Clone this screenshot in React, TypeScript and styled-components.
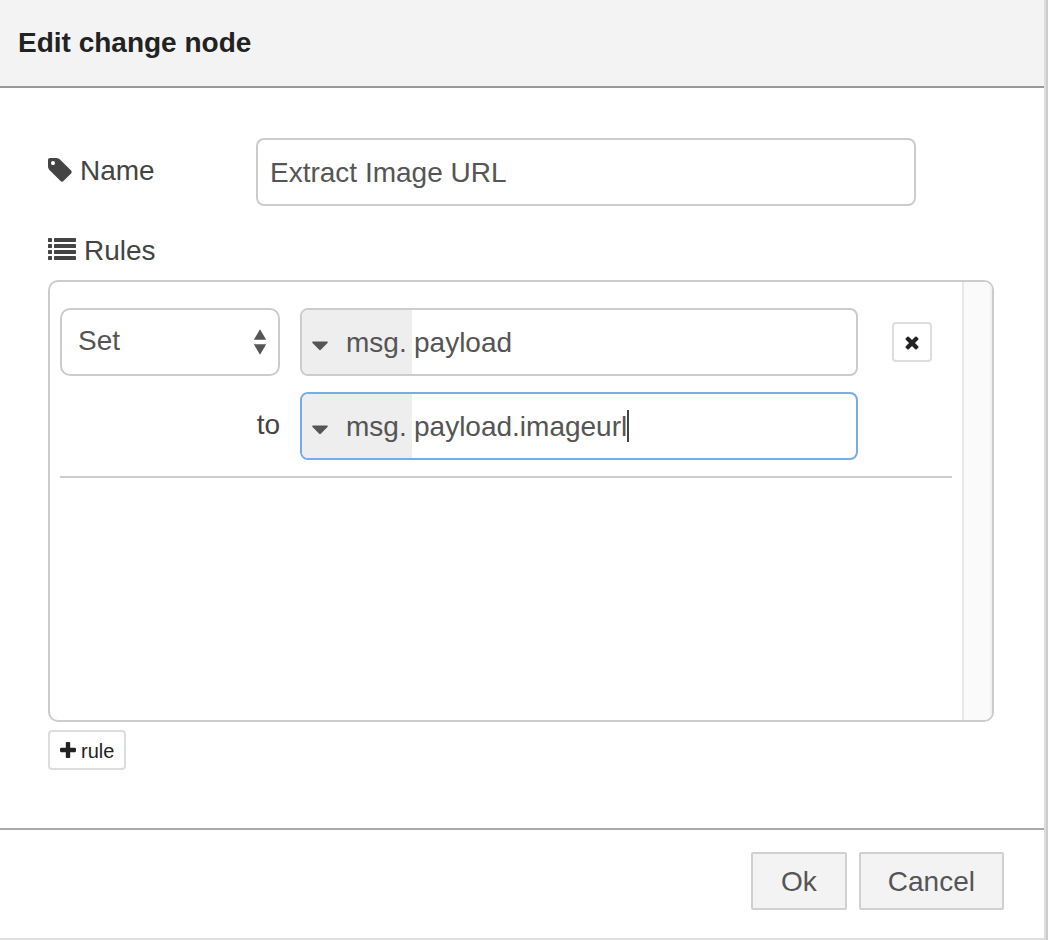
import React, { useState } from "react";
import styled, { createGlobalStyle } from "styled-components";

const GlobalStyle = createGlobalStyle`
  *, *::before, *::after { box-sizing: border-box; }
  body {
    margin: 0;
    background: #ccc;
    color: #444;
    font: 28px/40px "Liberation Sans", Arial, sans-serif;
  }
  button, input, select { font: inherit; }
`;

const Dialog = styled.form`
  display: flex;
  flex-direction: column;
  min-height: 100vh;
  margin-right: 2px;
  background: #fff;
  border-right: 2px solid #ddd;
  border-bottom: 2px solid #ddd;
`;

const Header = styled.header`
  padding: 23px 18px;
  background: #f3f3f3;
  border-bottom: 2px solid #999;
`;

const Title = styled.h1`
  margin: 0;
  color: #222;
  font-size: 28px;
  line-height: 40px;
  font-weight: bold;
`;

const Body = styled.main`
  flex: 1;
  padding: 50px 50px 58px 48px;
`;

const FormRow = styled.div`
  display: flex;
  align-items: center;
`;

const Label = styled.label`
  display: flex;
  align-items: center;
  gap: 8px;
  width: 208px;
  padding-bottom: 2px;

  svg { margin-bottom: 2px; }
`;

const NameInput = styled.input`
  flex: 1;
  min-width: 0;
  max-width: 660px;
  height: 68px;
  padding: 2px 12px 0;
  color: #555;
  background: #fff;
  border: 2px solid #ccc;
  border-radius: 8px;
  outline: none;
`;

const RulesHeading = styled.h2`
  display: flex;
  align-items: center;
  gap: 8px;
  margin: 25px 0 9px;
  font-size: 28px;
  line-height: 40px;
  font-weight: normal;

  svg { margin-bottom: 4px; }
`;

const RuleBox = styled.section`
  display: flex;
  min-height: 442px;
  border: 2px solid #ccc;
  border-radius: 10px;
  overflow: hidden;
`;

const RuleList = styled.div`
  flex: 1;
  min-width: 0;
  padding: 10px;
`;

const ScrollTrack = styled.div`
  width: 30px;
  background: #fafafa;
  border-left: 2px solid #e8e8e8;
  border-right: 2px solid #f0f0f0;
`;

const Rule = styled.div`
  display: grid;
  grid-template-columns: 220px minmax(0, 1fr) 54px;
  column-gap: 20px;
  row-gap: 16px;
  align-items: center;
  padding: 16px 20px 16px 0;
  border-bottom: 2px solid #ccc;
`;

const SelectWrap = styled.div`
  position: relative;
  color: #555;
`;

const Select = styled.select`
  display: block;
  width: 100%;
  height: 68px;
  padding: 0 40px 2px 16px;
  appearance: none;
  color: inherit;
  background: #fff;
  border: 2px solid #ccc;
  border-radius: 10px;
  outline: none;
`;

const SelectArrows = styled.svg`
  position: absolute;
  top: 20px;
  right: 13px;
  pointer-events: none;
`;

const ToLabel = styled.label`
  padding-bottom: 2px;
  text-align: right;
`;

const TypedField = styled.div<{ $active?: boolean }>`
  display: flex;
  align-items: center;
  height: 68px;
  color: #555;
  background: #fff;
  border: 2px solid ${(p) => (p.$active ? "#78aaec" : "#ccc")};
  border-radius: 8px;
  overflow: hidden;
`;

const TypeButton = styled.button`
  display: flex;
  align-items: center;
  gap: 18px;
  width: 110px;
  height: 100%;
  padding: 2px 0 0 10px;
  color: inherit;
  background: #eee;
  border: 0;

  svg { margin-top: 6px; }
`;

const TypedInput = styled.input<{ $fit?: boolean }>`
  ${(p) => (p.$fit ? "field-sizing: content;" : "flex: 1;")}
  min-width: 0;
  height: 100%;
  padding: 2px 0 0 2px;
  color: inherit;
  background: transparent;
  border: 0;
  outline: none;
  caret-color: transparent;
`;

const TextCursor = styled.span`
  width: 2px;
  height: 32px;
  background: #444;
`;

const SmallButton = styled.button`
  display: inline-flex;
  align-items: center;
  justify-content: center;
  gap: 5px;
  height: 40px;
  min-width: 40px;
  padding: 2px 10px 0;
  color: #222;
  font-size: 20px;
  background: #fff;
  border: 2px solid #ddd;
  border-radius: 4px;
`;

const RemoveButton = styled(SmallButton)`
  justify-self: end;
  width: 40px;
  padding: 2px 0 0;
`;

const AddButton = styled(SmallButton)`
  display: flex;
  margin-top: 8px;

  svg { margin-bottom: 2px; }
`;

const Footer = styled.footer`
  display: flex;
  justify-content: flex-end;
  gap: 12px;
  padding: 22px 40px 28px;
  border-top: 2px solid #aaa;
`;

const FooterButton = styled.button`
  min-width: 96px;
  height: 58px;
  padding: 2px 27px 0;
  color: #555;
  background: #f3f3f3;
  border: 2px solid #d0d0d0;
  border-radius: 2px;
`;

const TagIcon = () => (
  <svg width="24" height="24" viewBox="128 128 1536 1536" fill="currentColor" aria-hidden="true">
    <path d="M576 448q0-53-37.5-90.5t-90.5-37.5-90.5 37.5-37.5 90.5 37.5 90.5 90.5 37.5 90.5-37.5 37.5-90.5zm1067 576q0 53-37 90l-491 492q-39 37-91 37-53 0-90-37l-715-716q-38-37-64.5-101t-26.5-117v-416q0-52 38-90t90-38h416q53 0 117 26.5t102 64.5l715 714q37 39 37 91z" />
  </svg>
);

const ListIcon = () => (
  <svg width="28" height="22" viewBox="0 0 28 22" fill="currentColor" aria-hidden="true">
    {[0, 6, 12, 18].map((y) => (
      <React.Fragment key={y}>
        <rect x="0" y={y} width="4" height="4" rx="0.4" />
        <rect x="6" y={y} width="22" height="4" rx="0.4" />
      </React.Fragment>
    ))}
  </svg>
);

const CaretIcon = () => (
  <svg width="16" height="10" viewBox="0 0 16 10" fill="currentColor" aria-hidden="true">
    <path d="M1 0.5H15Q16.3 0.8 15.5 2L8.8 8.8Q8 9.6 7.2 8.8L0.5 2Q-0.3 0.8 1 0.5Z" />
  </svg>
);

const TimesIcon = () => (
  <svg width="14" height="14" viewBox="256 320 1280 1280" fill="currentColor" aria-hidden="true">
    <path d="M1490 1322q0 40-28 68l-136 136q-28 28-68 28t-68-28l-294-294-294 294q-28 28-68 28t-68-28l-136-136q-28-28-28-68t28-68l294-294-294-294q-28-28-28-68t28-68l136-136q28-28 68-28t68 28l294 294 294-294q28-28 68-28t68 28l136 136q28 28 28 68t-28 68l-294 294 294 294q28 28 28 68z" />
  </svg>
);

const PlusIcon = () => (
  <svg width="16" height="16" viewBox="192 128 1408 1408" fill="currentColor" aria-hidden="true">
    <path d="M1600 736v192q0 40-28 68t-68 28h-416v416q0 40-28 68t-68 28h-192q-40 0-68-28t-28-68v-416h-416q-40 0-68-28t-28-68v-192q0-40 28-68t68-28h416v-416q0-40 28-68t68-28h192q40 0 68 28t28 68v416h416q40 0 68 28t28 68z" />
  </svg>
);

export default function App() {
  const [name, setName] = useState("Extract Image URL");
  const [target, setTarget] = useState("payload");
  const [value, setValue] = useState("payload.imageurl");

  return (
    <>
      <GlobalStyle />
      <Dialog onSubmit={(e) => e.preventDefault()}>
        <Header>
          <Title>Edit change node</Title>
        </Header>
        <Body>
          <FormRow>
            <Label htmlFor="node-name">
              <TagIcon />
              Name
            </Label>
            <NameInput id="node-name" value={name} onChange={(e) => setName(e.target.value)} />
          </FormRow>
          <RulesHeading>
            <ListIcon />
            Rules
          </RulesHeading>
          <RuleBox>
            <RuleList>
              <Rule>
                <SelectWrap>
                  <Select aria-label="Action" defaultValue="set">
                    <option value="set">Set</option>
                  </Select>
                  <SelectArrows width="14" height="28" viewBox="0 0 14 28" fill="currentColor" aria-hidden="true">
                    <path d="M7 1.2L13.2 11.8H0.8ZM0.8 16.2H13.2L7 26.8Z" />
                  </SelectArrows>
                </SelectWrap>
                <TypedField>
                  <TypeButton type="button">
                    <CaretIcon />
                    msg.
                  </TypeButton>
                  <TypedInput aria-label="Property" value={target} onChange={(e) => setTarget(e.target.value)} />
                </TypedField>
                <RemoveButton type="button" aria-label="Remove rule">
                  <TimesIcon />
                </RemoveButton>
                <ToLabel htmlFor="rule-value">to</ToLabel>
                <TypedField $active>
                  <TypeButton type="button">
                    <CaretIcon />
                    msg.
                  </TypeButton>
                  <TypedInput id="rule-value" $fit value={value} onChange={(e) => setValue(e.target.value)} />
                  <TextCursor />
                </TypedField>
              </Rule>
            </RuleList>
            <ScrollTrack />
          </RuleBox>
          <AddButton type="button">
            <PlusIcon />
            rule
          </AddButton>
        </Body>
        <Footer>
          <FooterButton type="submit">Ok</FooterButton>
          <FooterButton type="button">Cancel</FooterButton>
        </Footer>
      </Dialog>
    </>
  );
}
